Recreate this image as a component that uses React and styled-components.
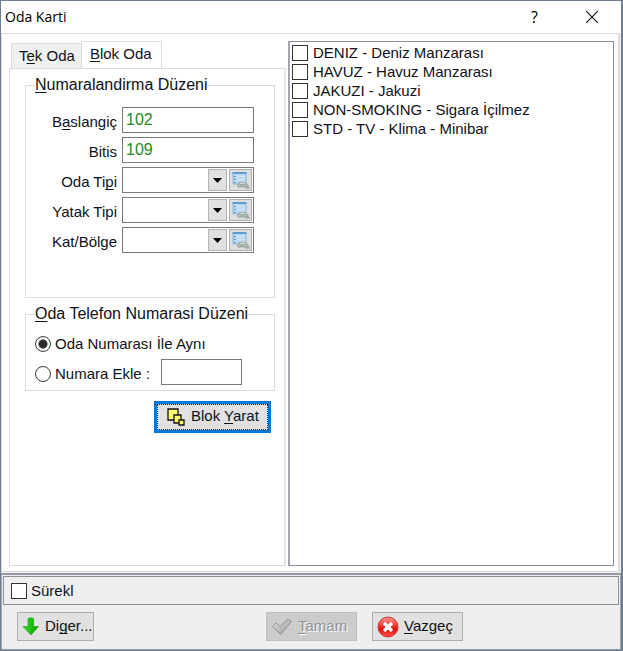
import React from 'react';
import styled, { createGlobalStyle, css } from 'styled-components';

const GlobalStyle = createGlobalStyle`
  *, *::before, *::after { box-sizing: border-box; }
  body { margin: 0; background: #efefef; }
  body, button, input, select {
    font-family: "Liberation Sans", Arial, sans-serif;
    font-size: 15px;
    line-height: 20px;
    color: #111118;
  }
  u { text-decoration-thickness: 1px; text-underline-offset: 2px; text-decoration-skip-ink: none; }
`;

const Dialog = styled.div`
  min-height: 100vh;
  display: flex;
  flex-direction: column;
  border: 1px solid #6f7d92;
  border-right-width: 2px;
  background: #efefef;
`;

const TitleBar = styled.header`
  height: 32px;
  display: flex;
  align-items: center;
  background: #fff;
  padding-left: 4px;
`;

const Title = styled.h1`
  flex: 1;
  margin: 0;
  font: 400 14px/20px "Open Sans", sans-serif;
  color: #000;
`;

const TitleButton = styled.button`
  width: 57px;
  height: 30px;
  display: flex;
  align-items: center;
  justify-content: center;
  border: 0;
  padding: 0;
  background: none;
  font: 400 16px/20px "Open Sans", sans-serif;
  color: #000;
  &:last-child { margin-right: 1px; }
`;

const Body = styled.main`
  flex: 1;
  display: flex;
  gap: 2px;
  margin: 0 1px 0 0;
  padding: 7px 4px 5px 7px;
  border: 1px solid #dcdcdc;
  border-right-width: 2px;
  background: #fff;
`;

const Tabs = styled.section`
  width: 277px;
  display: flex;
  flex-direction: column;
`;

const TabList = styled.div`
  display: flex;
  align-items: flex-end;
  height: 28px;
  padding-left: 2px;
  margin-bottom: -1px;
`;

const Tab = styled.button`
  border: 1px solid #dcdcdc;
  padding: 0 6px 0 7px;
  white-space: nowrap;
  ${(p) => p.$active ? css`
    height: 28px;
    padding: 0 9px 3px 8px;
    background: #fff;
    border-bottom-color: #fff;
  ` : css`
    height: 26px;
    background: #f0f0f0;
    border-right: 0;
  `}
`;

const TabPanel = styled.div`
  flex: 1;
  border: 1px solid #dcdcdc;
  border-right: 2px solid #e4e4e4;
  padding: 6px 9px 0 15px;
`;

const Group = styled.fieldset`
  min-width: 0;
  margin: 0 0 6px;
  padding: 0 20px 0 9px;
  border: 1px solid #dcdcdc;
  height: ${(p) => p.$height}px;
`;

const Legend = styled.legend`
  padding: 0;
  font-size: 16px;
  line-height: 20px;
`;

const FieldGrid = styled.div`
  display: grid;
  grid-template-columns: 82px 1fr;
  grid-auto-rows: 26px;
  gap: 4px 5px;
  align-items: center;
  padding-top: 12px;
`;

const FieldLabel = styled.label`
  text-align: right;
  padding-top: 3px;
  white-space: nowrap;
`;

const TextBox = styled.input`
  width: 100%;
  height: 26px;
  min-width: 0;
  border: 1px solid #7a7a7a;
  border-radius: 0;
  padding: 0 3px;
  background: #fff;
  color: #1f8a1f;
  font-size: 16px;
  outline: 0;
`;

const Combo = styled.div`
  display: grid;
  grid-template-columns: 1fr 19px 23px;
  column-gap: 2px;
  height: 26px;
  padding: 1px;
  border: 1px solid #7a7a7a;
  background: #fff;
`;

const ComboSelect = styled.select`
  grid-column: 1 / 3;
  grid-row: 1;
  min-width: 0;
  appearance: none;
  border: 0;
  padding: 0 22px 0 2px;
  background: transparent;
`;

const ComboArrow = styled.span`
  grid-column: 2;
  grid-row: 1;
  display: flex;
  align-items: center;
  justify-content: center;
  pointer-events: none;
  border: 1px solid #b4b4b4;
  background: #e1e1e1;
`;

const LookupButton = styled.button`
  grid-column: 3;
  grid-row: 1;
  display: flex;
  align-items: center;
  justify-content: center;
  padding: 0;
  border: 1px solid #adadad;
  background: #dedede;
`;

const RadioRow = styled.div`
  display: flex;
  align-items: center;
  height: ${(p) => p.$height}px;
`;

const ChoiceLabel = styled.label`
  display: flex;
  align-items: center;
  gap: ${(p) => p.$gap || 4}px;
  white-space: nowrap;
`;

const Radio = styled.input`
  appearance: none;
  flex: none;
  width: 16px;
  height: 16px;
  margin: 0;
  border: 1px solid #3a3a3a;
  border-radius: 50%;
  background: #fff;
  &:checked { background: radial-gradient(circle, #2b2b2b 4px, #fff 5px); }
`;

const ExtraBox = styled(TextBox)`
  width: 81px;
  margin: 0 0 5px 11px;
`;

const ActionRow = styled.div`
  display: flex;
  justify-content: flex-end;
  padding: 4px 4px 0 0;
`;

const PushButton = styled.button`
  width: ${(p) => p.$width}px;
  height: 29px;
  display: flex;
  align-items: center;
  justify-content: flex-start;
  gap: 5px;
  padding: 0 0 2px 4px;
  border: 1px solid #adadad;
  background: #e1e1e1;
  white-space: nowrap;
  svg { flex: none; margin-top: 2px; }
  &:disabled {
    background: #cccccc;
    border-color: #bfbfbf;
    color: #929292;
    text-shadow: 1px 1px 0 #fff;
  }
`;

const DefaultButton = styled(PushButton)`
  height: 32px;
  padding-left: 10px;
  border: 3px solid #0078d7;
  outline: 1px dotted #222;
  outline-offset: -4px;
  gap: 6px;
`;

const FeatureList = styled.ul`
  flex: 1;
  margin: 0;
  padding: 1px 2px;
  list-style: none;
  border: 1px solid #8b9099;
  border-left: 2px solid #a2a7ae;
`;

const Feature = styled.li`
  height: 19px;
  display: flex;
  align-items: center;
`;

const Check = styled.input`
  appearance: none;
  flex: none;
  width: 16px;
  height: 16px;
  margin: 0;
  border: 1px solid #333;
  background: #fff;
  &:checked { box-shadow: inset 0 0 0 3px #fff; background: #333; }
`;

const Footer = styled.footer`
  margin-top: 1px;
  padding: 1px 1px 0;
  border: 1px solid #a3a7b0;
  border-top: 2px solid #9599a3;
  border-bottom-color: #8e98a8;
`;

const OptionBar = styled.div`
  height: 29px;
  display: flex;
  align-items: center;
  padding-left: 7px;
  border: 1px solid #8b909c;
`;

const Commands = styled.div`
  display: flex;
  gap: 15px;
  padding: 7px 156px 8px 14px;
`;

const CommandSpacer = styled.div`
  flex: 1;
`;

const CloseIcon = () => (
  <svg width="12" height="12" viewBox="0 0 12 12" aria-hidden="true">
    <path d="M0 0L12 12M12 0L0 12" stroke="#111" strokeWidth="1.1" />
  </svg>
);

const LookupIcon = () => (
  <svg width="19" height="19" viewBox="0 0 19 19" aria-hidden="true">
    <path d="M2 2h13v11H2z" fill="#bedaf1" stroke="#8fb2d4" />
    <path d="M1.5 2h14" stroke="#438ed2" strokeWidth="1.5" />
    <path d="M3 5.500h1.500M3 8.500h1.500M3 11.500h1.500" stroke="#2d7dc6" />
    <path d="M6 5.500h8M6 8.500h8" stroke="#d3e8f8" />
    <path d="M6 14.500l2-3.500h6l2 1.500l2 2v2H7z" fill="#a4b2ae" />
    <path d="M9 12.500h5" stroke="#d5dedb" />
    <circle cx="8.500" cy="14.500" r="1.500" fill="#c8d8c4" stroke="#8b9b92" />
    <circle cx="14.500" cy="14.500" r="1.500" fill="#c8d8c4" stroke="#8b9b92" />
    <path d="M14 17h5" stroke="#8b9b92" />
  </svg>
);

const BlocksIcon = () => (
  <svg width="18" height="18" viewBox="0 0 18 18" aria-hidden="true">
    <g fill="#ffff70" stroke="#111" strokeWidth="1.300">
      <path d="M1 1h10v11H1z" />
      <path d="M7 7h7v8H7z" />
      <path d="M12 12h5v5h-5z" />
    </g>
  </svg>
);

const DownIcon = () => (
  <svg width="18" height="19" viewBox="0 0 18 19" aria-hidden="true">
    <defs>
      <linearGradient id="down" x1="0" x2="1">
        <stop offset="0" stopColor="#38d629" />
        <stop offset="0.500" stopColor="#18c50e" />
        <stop offset="1" stopColor="#079205" />
      </linearGradient>
    </defs>
    <path d="M6 1.500Q9 0 11.500 1.500V9.500H16.500L9 18L1 9.500H6z" fill="url(#down)" stroke="#26a31d" strokeWidth="0.700" />
  </svg>
);

const TickIcon = () => (
  <svg width="22" height="20" viewBox="0 0 22 20" aria-hidden="true">
    <defs>
      <linearGradient id="tick" x2="1" y2="1">
        <stop offset="0" stopColor="#e2e2e2" />
        <stop offset="1" stopColor="#999" />
      </linearGradient>
    </defs>
    <path d="M1.500 9.500L5 6L9 9.500L17 2L20.500 4.500L9.500 17.500z" fill="url(#tick)" stroke="#909090" strokeLinejoin="round" />
  </svg>
);

const CancelIcon = () => (
  <svg width="22" height="22" viewBox="0 0 22 22" aria-hidden="true">
    <defs>
      <linearGradient id="cancel" x2="0" y2="1">
        <stop offset="0" stopColor="#ff9a90" />
        <stop offset="0.450" stopColor="#ee3932" />
        <stop offset="0.600" stopColor="#e20a0a" />
        <stop offset="1" stopColor="#ff5548" />
      </linearGradient>
    </defs>
    <circle cx="11" cy="11" r="10" fill="url(#cancel)" stroke="#d52d2d" />
    <path d="M7 7l8 8M15 7l-8 8" stroke="#fff" strokeWidth="3.400" />
  </svg>
);

const LOOKUPS = [
  { id: 'oda-tipi', label: <>Oda Ti<u>p</u>i</> },
  { id: 'yatak-tipi', label: 'Yatak Tipi' },
  { id: 'kat-bolge', label: 'Kat/Bölge' },
];

const FEATURES = [
  'DENIZ - Deniz Manzarası',
  'HAVUZ - Havuz Manzarası',
  'JAKUZI - Jakuzi',
  'NON-SMOKING - Sigara İçilmez',
  'STD - TV - Klima - Minibar',
];

function LookupField({ id, label }) {
  return (
    <>
      <FieldLabel id={`${id}-label`} htmlFor={id}>{label}</FieldLabel>
      <Combo>
        <ComboSelect id={id} defaultValue=""><option value="" /></ComboSelect>
        <ComboArrow>
          <svg width="9" height="5" viewBox="0 0 9 5" aria-hidden="true"><path d="M0 0H9L4.500 5z" fill="#000" /></svg>
        </ComboArrow>
        <LookupButton type="button" aria-labelledby={`${id}-label`}><LookupIcon /></LookupButton>
      </Combo>
    </>
  );
}

export default function App() {
  return (
    <>
      <GlobalStyle />
      <Dialog role="dialog" aria-labelledby="title">
        <TitleBar>
          <Title id="title">Oda Karti</Title>
          <TitleButton type="button">?</TitleButton>
          <TitleButton type="button" aria-label="Kapat"><CloseIcon /></TitleButton>
        </TitleBar>
        <Body>
          <Tabs>
            <TabList role="tablist">
              <Tab type="button" role="tab" aria-selected="false">T<u>e</u>k Oda</Tab>
              <Tab type="button" role="tab" aria-selected="true" $active><u>B</u>lok Oda</Tab>
            </TabList>
            <TabPanel role="tabpanel">
              <Group $height={223}>
                <Legend><u>N</u>umaralandirma Düzeni</Legend>
                <FieldGrid>
                  <FieldLabel htmlFor="first">B<u>a</u>slangiç</FieldLabel>
                  <TextBox id="first" defaultValue="102" />
                  <FieldLabel htmlFor="last">Bitis</FieldLabel>
                  <TextBox id="last" defaultValue="109" />
                  {LOOKUPS.map((f) => <LookupField key={f.id} {...f} />)}
                </FieldGrid>
              </Group>
              <Group $height={87}>
                <Legend><u>O</u>da Telefon Numarasi Düzeni</Legend>
                <RadioRow $height={40}>
                  <ChoiceLabel><Radio type="radio" name="phone" defaultChecked />Oda Numarası İle Aynı</ChoiceLabel>
                </RadioRow>
                <RadioRow $height={20}>
                  <ChoiceLabel><Radio type="radio" name="phone" />Numara Ekle :</ChoiceLabel>
                  <ExtraBox aria-label="Numara Ekle" />
                </RadioRow>
              </Group>
              <ActionRow>
                <DefaultButton type="button" $width={117}><BlocksIcon /><span>Blok <u>Y</u>arat</span></DefaultButton>
              </ActionRow>
            </TabPanel>
          </Tabs>
          <FeatureList>
            {FEATURES.map((f) => (
              <Feature key={f}><ChoiceLabel $gap={5}><Check type="checkbox" />{f}</ChoiceLabel></Feature>
            ))}
          </FeatureList>
        </Body>
        <Footer>
          <OptionBar>
            <ChoiceLabel><Check type="checkbox" />Sürekl</ChoiceLabel>
          </OptionBar>
          <Commands>
            <PushButton type="button" $width={77}><DownIcon /><span>Di<u>g</u>er...</span></PushButton>
            <CommandSpacer />
            <PushButton type="button" $width={91} disabled><TickIcon /><span><u>T</u>amam</span></PushButton>
            <PushButton type="button" $width={91}><CancelIcon /><span><u>V</u>azgeç</span></PushButton>
          </Commands>
        </Footer>
      </Dialog>
    </>
  );
}
